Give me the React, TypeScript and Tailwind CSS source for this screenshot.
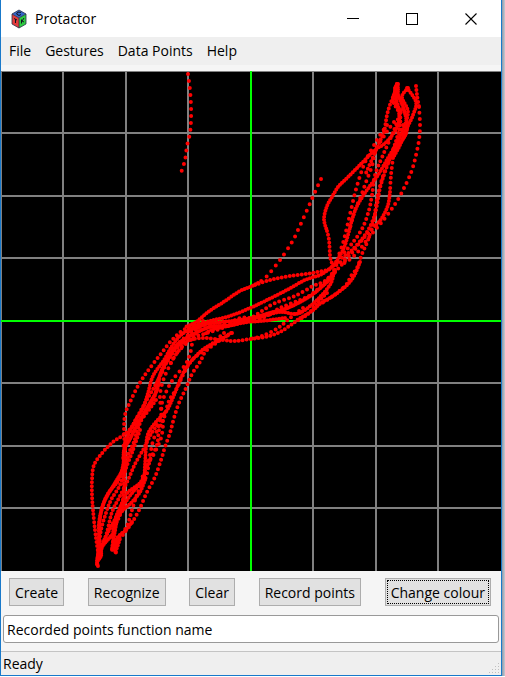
import React from "react";

type Point = [number, number];
type Stroke = { gap: number; points: Point[] };

const GRID = [62, 125, 187, 312, 375, 437];

// Recorded gestures, in plot coordinates (origin 1,71).
const STROKES: Stroke[] = [
  { gap: 7, points: [[188,74],[190,90],[191,106],[191,120],[190,133],[187,146],[185,160],[181,173]] },
  { gap: 7, points: [[321,179],[315,192],[308,208],[298,230],[292,242],[280,260],[268,275],[260,282]] },
  { gap: 3, points: [[397,84],[395,95],[399,110],[398,125],[390,138],[383,145],[375,150],[360,165],[345,180],[338,187],[332,197],[327,206],[324,219],[327,231]] },
  { gap: 4, points: [[327,231],[329,240],[330,256],[331,268],[312,273],[290,276],[270,280],[252,286]] },
  { gap: 3, points: [[258,283],[250,287],[240,291],[222,303],[208,312],[196,322],[185,327]] },
  { gap: 4, points: [[416,86],[417,95],[419,107]] },
  { gap: 6, points: [[419,107],[420,125],[419,140],[416,155],[412,170],[406,184],[397,201],[385,218],[370,236],[355,255],[340,266]] },
  { gap: 3, points: [[407,88],[416,102],[413,115],[406,130],[400,145],[393,158]] },
  { gap: 5, points: [[393,158],[391,175],[390,192]] },
  { gap: 3, points: [[390,192],[388,205],[382,218],[375,226]] },
  { gap: 5, points: [[375,226],[362,240],[350,255],[335,266]] },
  { gap: 3, points: [[408,88],[402,97],[408,112],[403,130],[397,143],[388,158],[378,175],[367,190],[357,206],[352,220],[348,235],[343,250],[334,265]] },
  { gap: 4, points: [[398,84],[393,100],[400,115],[399,130],[393,150],[385,172],[380,188],[377,205],[373,220],[365,235],[352,250],[340,259]] },
  { gap: 4, points: [[396,90],[391,102],[387,115],[384,132],[379,143],[373,157],[366,173]] },
  { gap: 6, points: [[387,125],[377,140],[366,160],[360,176],[355,193],[351,210],[347,227],[343,243],[338,257]] },
  { gap: 6, points: [[394,122],[386,133],[376,150],[372,166],[366,182],[361,196],[354,213],[349,232]] },
  { gap: 5, points: [[401,110],[394,130],[383,155],[375,175],[372,195],[369,210],[363,227],[354,241],[342,255]] },
  { gap: 5, points: [[403,125],[394,150],[385,170],[379,190],[376,205],[374,220],[368,240],[362,254],[357,268],[351,276],[346,285],[333,296],[322,303]] },
  { gap: 2, points: [[395,88],[404,110],[407,130],[399,145],[392,155]] },
  { gap: 3, points: [[360,262],[354,276],[346,286],[333,296],[321,303],[312,311],[297,320]] },
  { gap: 3, points: [[338,262],[322,274],[305,280],[285,291],[265,301],[250,308],[230,316],[210,321],[195,326],[181,335],[172,346],[164,360],[153,376],[148,393],[143,408],[134,423],[127,438],[123,460]] },
  { gap: 5, points: [[335,270],[325,281],[313,286],[295,296],[275,303],[262,311],[250,318],[230,322],[208,324],[192,332],[176,346],[167,361],[161,375]] },
  { gap: 2, points: [[335,272],[328,281],[313,294],[300,302],[285,309],[270,313],[250,319],[232,325],[210,327],[192,335],[178,344],[167,360],[160,375],[157,390],[148,406],[138,423],[130,439],[124,450],[123,468],[115,483],[105,500],[100,518],[99,545]] },
  { gap: 3, points: [[334,270],[331,283],[320,297],[305,310],[295,314],[280,312],[260,317],[240,320],[222,322],[203,325],[188,332]] },
  { gap: 5, points: [[345,261],[335,272],[326,281],[312,294],[300,300],[280,308],[262,318],[240,318],[225,327],[207,333],[190,339],[177,353],[170,364]] },
  { gap: 4, points: [[327,293],[318,302],[308,314],[295,322],[280,332],[265,337],[250,339],[235,341],[222,340],[205,338],[190,340],[178,347],[167,362],[157,382],[145,403],[133,425],[123,447]] },
  { gap: 5, points: [[303,308],[290,318],[278,328],[262,336],[250,339]] },
  { gap: 3, points: [[285,318],[262,321],[248,322],[228,326],[211,330],[204,335]] },
  { gap: 5, points: [[203,321],[185,329],[172,340],[160,355],[147,372],[138,386],[130,402],[125,415],[124,432],[125,450],[124,468],[124,490]] },
  { gap: 4, points: [[156,400],[145,415],[135,424],[125,434],[113,442],[103,452],[94,465],[92,480],[92,495],[93,510],[95,530],[97,545],[99,558]] },
  { gap: 5, points: [[232,333],[219,341],[206,351],[200,362],[192,374],[186,388],[179,403],[174,418],[170,433],[165,447],[161,460],[155,477],[147,492],[140,508],[133,521],[125,532],[115,546]] },
  { gap: 3, points: [[231,333],[218,341],[205,348],[195,357],[186,368],[180,380],[174,395],[167,410],[155,423],[148,434],[146,447],[145,465],[143,480],[132,493],[123,506],[113,523],[101,546]] },
  { gap: 5, points: [[224,333],[207,348],[192,360],[184,373],[177,388],[169,401],[164,418],[159,430],[157,445],[150,460],[146,477],[138,492],[132,510],[127,526],[119,538],[115,553]] },
  { gap: 6, points: [[198,328],[193,340],[190,354],[185,365],[174,378],[167,390],[162,403],[161,416],[158,428],[153,441],[150,455],[146,471]] },
  { gap: 6, points: [[190,340],[177,353],[169,367],[163,381],[160,395],[161,409],[163,423],[161,438],[155,452],[148,464],[142,478]] },
  { gap: 4, points: [[158,380],[154,398],[145,413],[138,428],[134,442],[128,455],[125,470],[120,485],[111,500],[106,513],[101,530],[99,547]] },
  { gap: 4, points: [[157,425],[150,436],[143,450],[135,464],[128,480],[119,498],[112,512],[107,532],[101,550]] },
  { gap: 3, points: [[125,450],[123,466],[118,481],[109,492],[103,505],[99,523],[99,542],[97,565]] },
  { gap: 4, points: [[140,430],[133,450],[125,472],[124,490],[121,512],[115,527],[112,550]] },
  { gap: 3, points: [[144,476],[139,484],[127,493],[121,505],[115,520],[113,537],[116,553]] },
  { gap: 3, points: [[145,480],[140,492],[132,502],[119,515],[115,531],[112,550]] },
  { gap: 3, points: [[132,522],[125,531],[117,538],[112,550],[119,541],[115,553]] },
  { gap: 2, points: [[112,535],[102,547],[101,556],[97,562],[98,566],[97,561],[99,550]] },
  { gap: 2, points: [[396,86],[395,92],[397,84],[398,91],[396,102],[401,113]] },
];

// Smooth curve through the sampled points (Catmull-Rom to cubic Bézier).
function smooth(points: Point[]): string {
  let d = `M${points[0][0]} ${points[0][1]}`;
  for (let i = 0; i < points.length - 1; i++) {
    const p0 = points[Math.max(i - 1, 0)];
    const p1 = points[i];
    const p2 = points[i + 1];
    const p3 = points[Math.min(i + 2, points.length - 1)];
    d += `C${p1[0] + (p2[0] - p0[0]) / 6} ${p1[1] + (p2[1] - p0[1]) / 6} ${p2[0] - (p3[0] - p1[0]) / 6} ${p2[1] - (p3[1] - p1[1]) / 6} ${p2[0]} ${p2[1]}`;
  }
  return d;
}

function GtkLogo() {
  return (
    <svg viewBox="0 0 16 20" className="h-5 w-4" aria-hidden="true">
      <path d="M8 1 15 5 8 9 1 5Z" fill="#3465c8" />
      <path d="M1 5 8 9V19L1 15Z" fill="#e23b3b" />
      <path d="M15 5 8 9V19L15 15Z" fill="#2ecc40" />
      <path d="M8 1 15 5V15L8 19 1 15V5ZM1 5 8 9 15 5M8 9V19" fill="none" stroke="#28304a" strokeWidth="0.8" />
      <path d="M10 3.5 7 3 5.500 5 8 6.500 10 5.500M3 9.500 6 11M4.500 10V14M10.500 10.500V14.500M13 9 11 12 13 13" fill="none" stroke="#101522" strokeWidth="1" />
    </svg>
  );
}

function TitleBar() {
  return (
    <header className="flex h-[37px] items-center bg-white pl-[10px] pr-6">
      <GtkLogo />
      <h1 className="ml-2 flex-1 text-[14px] leading-5">Protactor</h1>
      <div className="flex items-center gap-[47px]">
        <button type="button" aria-label="Minimize" className="block">
          <svg viewBox="0 0 12 12" className="block size-3" shapeRendering="crispEdges">
            <path d="M0 5.500H12" stroke="#000" />
          </svg>
        </button>
        <button type="button" aria-label="Maximize" className="block">
          <svg viewBox="0 0 12 12" className="block size-3" shapeRendering="crispEdges">
            <path d="M.5.5H11.500V11.500H.5Z" fill="none" stroke="#000" />
          </svg>
        </button>
        <button type="button" aria-label="Close" className="block">
          <svg viewBox="0 0 12 12" className="block size-3">
            <path d="M.5.5 11.500 11.500M11.500.5.5 11.500" stroke="#000" strokeWidth="1.100" />
          </svg>
        </button>
      </div>
    </header>
  );
}

function MenuBar() {
  return (
    <nav className="flex h-7 items-center gap-[14px] bg-[#efefef] px-2">
      {["File", "Gestures", "Data Points", "Help"].map((label) => (
        <button key={label} type="button" className="text-[14px] leading-5">
          {label}
        </button>
      ))}
    </nav>
  );
}

function Plot() {
  return (
    <svg viewBox="1 71 500 500" className="block aspect-square w-full bg-black" role="img" aria-label="Recorded gestures">
      <g stroke="#808080" strokeWidth="2" shapeRendering="crispEdges">
        <path d="M1 71H501M1 71V571" fill="none" />
        {GRID.map((g) => (
          <path key={g} d={`M${g + 1} 71V571M1 ${g + 71}H501`} />
        ))}
        <path d="M251 71V571M1 321H501" stroke="#00ff00" />
      </g>
      <g fill="none" stroke="#ff0000" strokeWidth="4" strokeLinecap="round" strokeLinejoin="round">
        {STROKES.map((s, i) => (
          <path key={i} d={smooth(s.points)} strokeDasharray={`0 ${s.gap}`} />
        ))}
      </g>
    </svg>
  );
}

function PushButton({ label, focused = false }: { label: string; focused?: boolean }) {
  return (
    <button type="button" className="h-7 border border-[#adadad] bg-[#e1e1e1] p-px text-[14px]">
      <span
        className={
          focused
            ? "flex h-full items-center border border-dotted border-black px-[3px]"
            : "flex h-full items-center px-1"
        }
      >
        {label}
      </span>
    </button>
  );
}

export default function App() {
  return (
    <div className="flex bg-[#adb5c2] font-['Open_Sans','Noto_Sans',sans-serif] text-black">
      <div className="min-w-0 flex-1 border-x border-b border-[#1979ca] bg-[#f5f5f5]">
        <TitleBar />
        <MenuBar />
        <main className="pt-[6px]">
          <Plot />
          <div className="flex justify-between pt-[7px] pr-[10px] pl-2">
            <PushButton label="Create" />
            <PushButton label="Recognize" />
            <PushButton label="Clear" />
            <PushButton label="Record points" />
            <PushButton label="Change colour" focused />
          </div>
          <div className="px-[2px] pt-[9px] pb-2">
            <input
              type="text"
              aria-label="Function name"
              defaultValue="Recorded points function name"
              className="block h-7 w-full rounded-[3px] border border-[#999] bg-white px-[3px] text-[14px] outline-none"
            />
          </div>
        </main>
        <footer className="flex h-6 items-center justify-between border-t border-[#c4c4c4] bg-[#efefef] pl-[2px]">
          <span className="text-[14px] leading-5">Ready</span>
          <svg viewBox="0 0 12 12" className="size-3 self-end" fill="#bfbfbf" shapeRendering="crispEdges" aria-hidden="true">
            <path d="M9 0h1v1H9zM6 3h1v1H6zM9 3h1v1H9zM3 6h1v1H3zM6 6h1v1H6zM9 6h1v1H9zM0 9h1v1H0zM3 9h1v1H3zM6 9h1v1H6zM9 9h1v1H9z" />
          </svg>
        </footer>
      </div>
      <div className="w-[3px] bg-gradient-to-r from-[#8d98a8] to-[#c5cbd3]" />
    </div>
  );
}
